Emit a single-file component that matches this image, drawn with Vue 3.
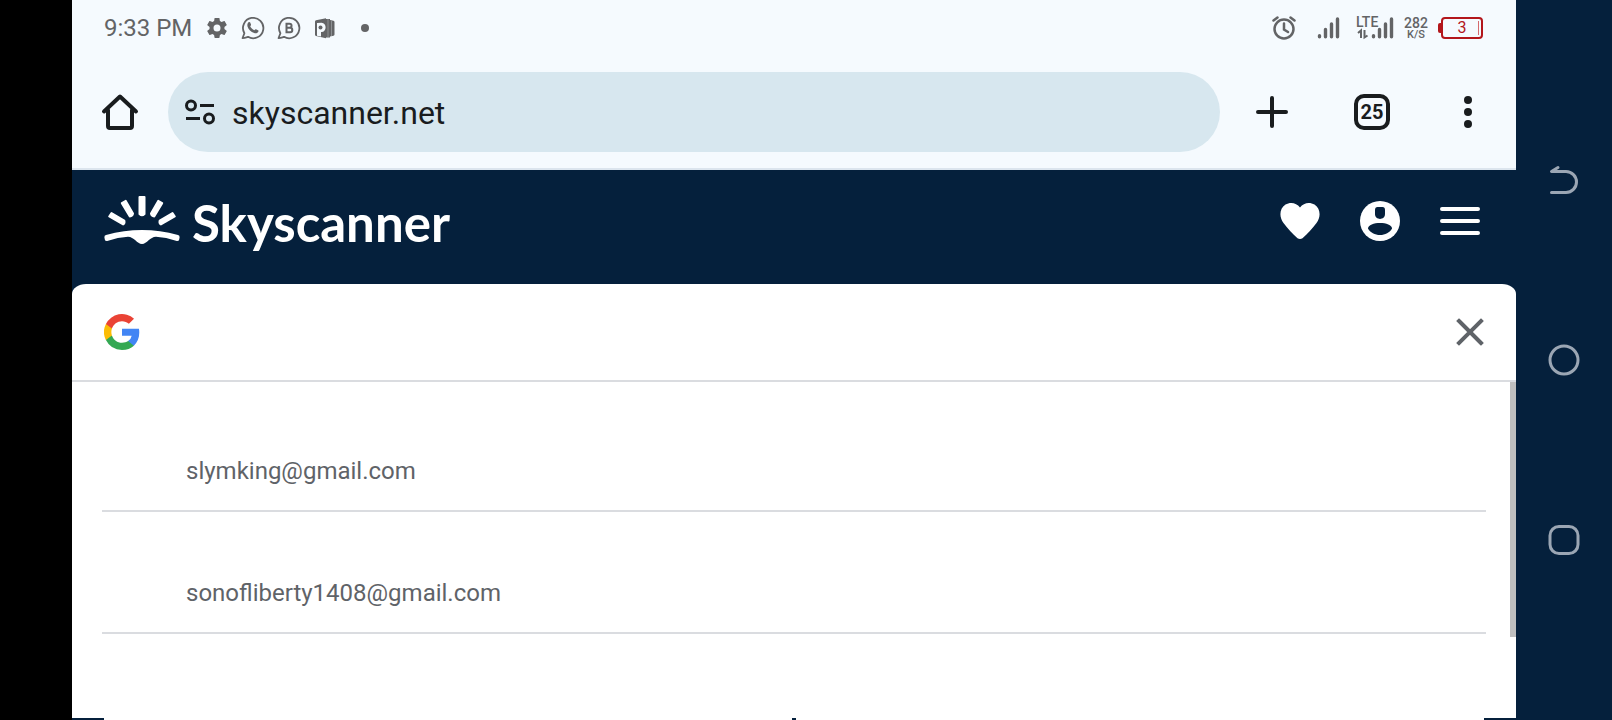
<script setup>
/**
 * Phone in landscape: browser with the account picker open
 */
import { ref } from 'vue'

const url = ref('skyscanner.net')
const tabCount = ref(25)
const dialogOpen = ref(true)

const accounts = [
    { email: 'slymking@gmail.com' },
    { email: 'sonofliberty1408@gmail.com' }
]
</script>

<template>
    <div class="phone">
        <div class="cutout"></div>

        <main class="screen">
            <div class="status-bar">
                <span class="clock">9:33 PM</span>
                <div class="notifications">
                    <svg width="24" height="24" viewBox="0 0 24 24">
                        <path fill="currentColor" d="M19.4 13c0-.3.1-.6.1-1s0-.7-.1-1l2.200-1.700c.2-.1.2-.4.1-.6l-2-3.500c-.1-.2-.4-.3-.6-.2l-2.500 1c-.5-.4-1.100-.7-1.700-1l-.4-2.600c0-.2-.2-.4-.5-.4h-4c-.2 0-.5.2-.5.4l-.4 2.600c-.6.2-1.100.6-1.700 1l-2.500-1c-.2-.1-.5 0-.6.2l-2 3.500c-.1.2-.1.5.1.6L4.600 11c0 .3-.1.7-.1 1s0 .7.1 1l-2.200 1.700c-.2.1-.2.4-.1.6l2 3.500c.1.2.4.3.6.2l2.500-1c.5.4 1.100.7 1.700 1l.4 2.600c0 .2.3.4.5.4h4c.3 0 .5-.2.5-.4l.4-2.600c.6-.3 1.200-.6 1.700-1l2.500 1c.2.1.5 0 .6-.2l2-3.500c.1-.2.1-.5-.1-.6L19.400 13zM12 15.500a3.500 3.500 0 1 1 0-7 3.500 3.500 0 0 1 0 7z" />
                    </svg>
                    <svg width="24" height="24" viewBox="0 0 24 24">
                        <path fill="none" stroke="currentColor" stroke-width="1.800" stroke-linejoin="round" d="M3.400 17.200A10.200 10.200 0 1 1 7 20.800c-1.500.5-3.200 1.200-5.500 1.400l1.900-5z" />
                        <path fill="currentColor" d="M7.300 6.500c.7-.7 1.600-.6 1.900.1l.8 1.900c.2.500-.1 1-.8 1.800.8 1.700 2.200 3.100 4.200 4 .6-.7 1-1.300 1.600-1.100l2 1c.7.3.6 1.200.1 1.900-.8 1.200-2.400 1.500-3.900 1-3.300-1.100-5.700-3.500-6.700-6.500-.4-1.500 0-3.200.8-4.100z" />
                    </svg>
                    <svg width="24" height="24" viewBox="0 0 24 24">
                        <path fill="none" stroke="currentColor" stroke-width="1.800" stroke-linejoin="round" d="M3.400 17.200A10.200 10.200 0 1 1 7 20.800c-1.500.5-3.200 1.200-5.500 1.400l1.900-5z" />
                        <path fill="none" stroke="currentColor" stroke-width="2" d="M9.500 7.700h3a2 2 0 0 1 0 4.100h-3zM9.500 11.800h3.600a2.200 2.200 0 0 1 0 4.400H9.500z" />
                    </svg>
                    <svg width="24" height="24" viewBox="0 0 24 24">
                        <path fill="currentColor" d="M2 5.500Q2 4.500 3 4.300L13 2.200V3h4v1l3.500.8q1 .2 1 1.200v12.500q0 1-1 1.200L17 20.500v1h-4v.8L3 20q-1-.2-1-1.200z" />
                        <path fill="#f5fafe" d="M4 7l4.500-.3c5.500 0 5.500 9.300 0 9.300H8v4.500l-4-.8z" />
                        <circle cx="7.500" cy="11.400" r="2" fill="currentColor" />
                        <path stroke="#f5fafe" stroke-width=".3" d="M15 3v18M18.500 5v15" />
                    </svg>
                    <svg width="24" height="24" viewBox="0 0 24 24">
                        <circle cx="16" cy="12" r="4" fill="currentColor" />
                    </svg>
                </div>

                <div class="indicators">
                    <svg width="34" height="24" viewBox="0 0 34 24">
                        <g fill="none" stroke="currentColor" stroke-width="2.500" stroke-linecap="round">
                            <circle cx="12" cy="13" r="9.500" />
                            <path d="M12 7.500v6l4 2.500M1.500 4.500L5.500 1.500M18.500 1.500l4 3" />
                        </g>
                    </svg>
                    <svg width="30" height="24" viewBox="0 0 30 24">
                        <path stroke="currentColor" stroke-width="3.400" stroke-linecap="round" d="M3.500 19.800v1M9.500 13.500v7.300M15.500 8v12.800M21.500 3v17.800" />
                    </svg>
                    <svg width="38" height="36" viewBox="0 -6 38 36">
                        <text class="lte" x="0" y="11">LTE</text>
                        <path fill="none" stroke="currentColor" stroke-width="2" d="M5 22v-7.500l-3 2.500M8.500 14v7.500l3-2" />
                        <path stroke="currentColor" stroke-width="3.400" stroke-linecap="round" d="M17.500 19.800v1M23.500 13.500v7.300M29.500 8v12.800M35.500 3v17.800" />
                    </svg>
                    <span class="speed"><b>282</b><small>K/S</small></span>
                    <span class="battery">3</span>
                </div>
            </div>

            <nav class="toolbar">
                <button class="icon-btn" aria-label="Home">
                    <svg width="40" height="40" viewBox="0 0 40 40">
                        <path fill="none" stroke="currentColor" stroke-width="4" stroke-linejoin="round" stroke-linecap="round" d="M4 19.500L20 4.500l16 15M8 18v16q0 2 2 2h20q2 0 2-2V18" />
                    </svg>
                </button>
                <div class="address">
                    <svg width="32" height="32" viewBox="0 0 32 32">
                        <g fill="none" stroke="currentColor" stroke-width="3">
                            <circle cx="7" cy="9.500" r="4.500" />
                            <circle cx="25" cy="22.500" r="4.500" />
                            <path d="M16 9.500h14M2 22.500h14" />
                        </g>
                    </svg>
                    <input v-model="url" type="text" aria-label="Address" spellcheck="false">
                </div>
                <button class="icon-btn new-tab" aria-label="New tab">
                    <svg width="32" height="32" viewBox="0 0 32 32">
                        <path stroke="currentColor" stroke-width="4" stroke-linecap="round" d="M16 2v28M2 16h28" />
                    </svg>
                </button>
                <button class="icon-btn" aria-label="Tabs">
                    <span class="tab-count">{{ tabCount }}</span>
                </button>
                <button class="icon-btn" aria-label="More">
                    <svg width="32" height="32" viewBox="0 0 32 32" fill="currentColor">
                        <circle cx="16" cy="4" r="4" />
                        <circle cx="16" cy="16" r="4" />
                        <circle cx="16" cy="28" r="4" />
                    </svg>
                </button>
            </nav>

            <header class="site-header">
                <a class="brand" href="#">
                    <svg width="76" height="52" viewBox="0 0 76 52">
                        <g stroke="#fff" stroke-width="2" stroke-linejoin="round" fill="#fff">
                            <path d="M35.500 2h5v17q-2.500 2.500-5 0z" />
                            <path d="M17.800 8.200l4-2.300 7.200 12.700q-.4 2.600-3.200 2.900zM58.200 8.200l-4-2.300L47 18.600q.4 2.600 3.200 2.900z" />
                            <path d="M5.200 21.500l2.300-3.500 12.800 7.500q.8 2.800-1.200 4zM70.800 21.500l-2.300-3.500-12.800 7.500q-.8 2.800 1.200 4z" />
                        </g>
                        <path fill="#fff" d="M.4 42.500Q.2 40.400 2 40q36-10 72 0 1.800.4 1.600 2.500l-.6 2.700q-.5 1-2.200.8Q62 42.300 52 41.800c-6 0-9 7.200-14 7.200s-8-7.200-14-7.200Q14 42.300 3.200 46q-1.700.2-2.200-.8z" />
                    </svg>
                    <span>Skyscanner</span>
                </a>
                <div class="site-actions">
                    <button class="site-btn" aria-label="Saved">
                        <svg width="40" height="40" viewBox="0 0 40 40">
                            <path fill="currentColor" d="M20 6.500C16.500 1.500 10 .7 5.500 3.600-1 8 -.8 16.500 3.500 22c4 5.500 9 11 14 15.300q2.500 1.600 5 0c5-4.300 10-9.800 14-15.300 4.300-5.500 4.500-14-2-18.400C30 .7 23.500 1.500 20 6.500z" />
                        </svg>
                    </button>
                    <button class="site-btn" aria-label="Profile">
                        <svg width="40" height="40" viewBox="0 0 40 40">
                            <circle cx="20" cy="20" r="20" fill="currentColor" />
                            <path fill="#05203c" d="M15 9q0-3 2.500-3h5Q25 6 25 9v4c0 6.500-10 6.500-10 0z" />
                            <path fill="#05203c" d="M8 27.500C8 20 32 20 32 27.500 30 31.500 25 34 20 34S10 31.500 8 27.500z" />
                        </svg>
                    </button>
                    <button class="site-btn" aria-label="Menu">
                        <svg width="40" height="40" viewBox="0 0 40 40">
                            <path stroke="currentColor" stroke-width="4" stroke-linecap="round" d="M2 8h36M2 20h36M2 32h36" />
                        </svg>
                    </button>
                </div>
            </header>

            <section v-if="dialogOpen" class="picker">
                <div class="picker-head">
                    <svg width="36" height="36" viewBox="0 0 18 18">
                        <path fill="#4285f4" d="M17.640 9.200c0-.64-.06-1.250-.16-1.840H9v3.480h4.840a4.140 4.140 0 0 1-1.800 2.720v2.260h2.910c1.700-1.570 2.690-3.880 2.690-6.620z" />
                        <path fill="#34a853" d="M9 18c2.430 0 4.470-.8 5.960-2.180l-2.910-2.260c-.81.54-1.840.86-3.050.86-2.340 0-4.330-1.580-5.040-3.710H.96v2.330A9 9 0 0 0 9 18z" />
                        <path fill="#fbbc05" d="M3.960 10.710a5.400 5.400 0 0 1 0-3.420V4.960H.96a9 9 0 0 0 0 8.080l3-2.330z" />
                        <path fill="#ea4335" d="M9 3.580c1.320 0 2.510.45 3.440 1.350l2.580-2.590A9 9 0 0 0 .96 4.960l3 2.330C4.670 5.160 6.660 3.580 9 3.580z" />
                    </svg>
                    <button class="close" aria-label="Close" @click="dialogOpen = false">
                        <svg width="28" height="28" viewBox="0 0 28 28">
                            <path stroke="currentColor" stroke-width="4" stroke-linecap="square" d="M3 3l22 22M25 3L3 25" />
                        </svg>
                    </button>
                </div>
                <div class="picker-body">
                    <ul class="accounts">
                        <li v-for="account in accounts" :key="account.email">
                            <button class="account">{{ account.email }}</button>
                        </li>
                    </ul>
                    <div class="scroll-thumb"></div>
                </div>
            </section>

            <!-- edge of the page behind the picker -->
            <div class="page-edge">
                <div class="page-card"><span></span></div>
            </div>
        </main>

        <aside class="system-nav">
            <button aria-label="Back">
                <svg width="32" height="32" viewBox="0 0 32 32">
                    <path d="M10 3.500L3.500 7.500H18a10.500 10.500 0 0 1 0 21H3.500" />
                </svg>
            </button>
            <button aria-label="Home screen">
                <svg width="32" height="32" viewBox="0 0 32 32">
                    <circle cx="16" cy="16" r="14" />
                </svg>
            </button>
            <button aria-label="Recent apps">
                <svg width="32" height="32" viewBox="0 0 32 32">
                    <rect x="2" y="2.500" width="28" height="27" rx="9" />
                </svg>
            </button>
        </aside>
    </div>
</template>

<style>
body {
    margin: 0;
    background: #05203c;
}
</style>

<style scoped>
.phone {
    display: flex;
    min-height: 100vh;
    font-family: Roboto, "Liberation Sans", sans-serif;
}

button {
    display: flex;
    align-items: center;
    justify-content: center;
    padding: 0;
    border: none;
    background: none;
    color: inherit;
    font: inherit;
    cursor: pointer;
}

svg { flex: none; }

.cutout {
    flex: 0 0 72px;
    background: #000;
}

.screen {
    flex: 1;
    min-width: 0;
    display: flex;
    flex-direction: column;
    background: #05203c;
}

/* Status bar */
.status-bar {
    display: flex;
    align-items: center;
    height: 56px;
    padding: 0 33px 0 32px;
    background: #f5fafe;
    color: #636466;
}

.clock {
    font-size: 24px;
    margin-right: 13px;
}

.notifications {
    display: flex;
    gap: 12px;
}

.indicators {
    display: flex;
    align-items: center;
    gap: 10px;
    margin-left: auto;
}

.lte {
    fill: currentColor;
    font-size: 14px;
    font-weight: 500;
}

.speed {
    display: flex;
    flex-direction: column;
    align-items: center;
    width: 24px;
}

.speed b {
    font-size: 14px;
    line-height: 13px;
    font-weight: 500;
}

.speed small {
    font-size: 11px;
    line-height: 10px;
    font-weight: 500;
}

.battery {
    position: relative;
    box-sizing: border-box;
    width: 42px;
    height: 22px;
    margin-left: 3px;
    border: 2px solid #b3161b;
    border-radius: 4px;
    color: #b3161b;
    font-size: 16px;
    line-height: 18px;
    text-align: center;
}

.battery::before {
    content: "";
    position: absolute;
    left: -5px;
    top: 4px;
    width: 3px;
    height: 10px;
    border-radius: 2px 0 0 2px;
    background: #b3161b;
}

.battery::after {
    content: "";
    position: absolute;
    right: 2px;
    top: 2px;
    width: 1px;
    height: 14px;
    background: #d56a6d;
}

/* Browser toolbar */
.toolbar {
    display: flex;
    align-items: center;
    height: 112px;
    border-bottom: 2px solid #dce5ee;
    background: #f5fafe;
    color: #191c1e;
}

.icon-btn {
    flex: 0 0 96px;
    height: 80px;
}

.new-tab { flex-basis: 104px; }

.address {
    flex: 1;
    display: flex;
    align-items: center;
    gap: 16px;
    height: 80px;
    padding: 0 32px 0 16px;
    border-radius: 40px;
    background: #d7e7ef;
    box-sizing: border-box;
}

.address input {
    flex: 1;
    min-width: 0;
    padding: 2px 0 0;
    border: none;
    outline: none;
    background: none;
    color: inherit;
    font: inherit;
    font-size: 32px;
}

.tab-count {
    box-sizing: border-box;
    width: 36px;
    height: 36px;
    border: 4px solid currentColor;
    border-radius: 10px;
    font-size: 20px;
    line-height: 28px;
    font-weight: 700;
    text-align: center;
}

/* Site header */
.site-header {
    display: flex;
    align-items: center;
    justify-content: space-between;
    height: 102px;
    padding: 0 16px 12px 32px;
    color: #fff;
}

.brand {
    display: flex;
    align-items: center;
    gap: 12px;
    color: inherit;
    text-decoration: none;
    font-family: Lato, "Liberation Sans", sans-serif;
    font-size: 51px;
    line-height: 60px;
    font-weight: 700;
}

.brand span { padding-top: 4px; }

.site-actions { display: flex; }

.site-btn {
    width: 80px;
    height: 80px;
}

/* Account picker */
.picker {
    flex: 1;
    display: flex;
    flex-direction: column;
    border-radius: 14px 14px 0 0 / 10px 10px 0 0;
    background: #fff;
}

.picker-head {
    display: flex;
    align-items: center;
    justify-content: space-between;
    height: 96px;
    padding: 0 32px;
    border-bottom: 2px solid #dadce0;
}

.close { color: #5f6368; }

.picker-body {
    position: relative;
    flex: 1;
    padding: 8px 30px 0;
}

.accounts {
    margin: 0;
    padding: 0;
    list-style: none;
}

.account {
    align-items: flex-end;
    justify-content: flex-start;
    width: 100%;
    height: 122px;
    padding: 0 0 25px 84px;
    border-bottom: 2px solid #dadce0;
    color: #5f6368;
    font-size: 24px;
    line-height: 28px;
}

.scroll-thumb {
    position: absolute;
    top: 0;
    right: 0;
    width: 6px;
    height: 76%;
    background: #bfbfbf;
}

.page-edge {
    height: 2px;
    padding: 0 32px;
}

.page-card {
    display: flex;
    justify-content: center;
    height: 100%;
    background: #fff;
}

.page-card span {
    width: 4px;
    background: #05203c;
}

/* System navigation keys */
.system-nav {
    flex: 0 0 96px;
    box-sizing: border-box;
    display: flex;
    flex-direction: column;
    padding: 90px 0;
    background: #05203c;
}

.system-nav button { flex: 1; }

.system-nav svg {
    fill: none;
    stroke: #9ba6b4;
    stroke-width: 3;
    stroke-linecap: round;
    stroke-linejoin: round;
}
</style>
